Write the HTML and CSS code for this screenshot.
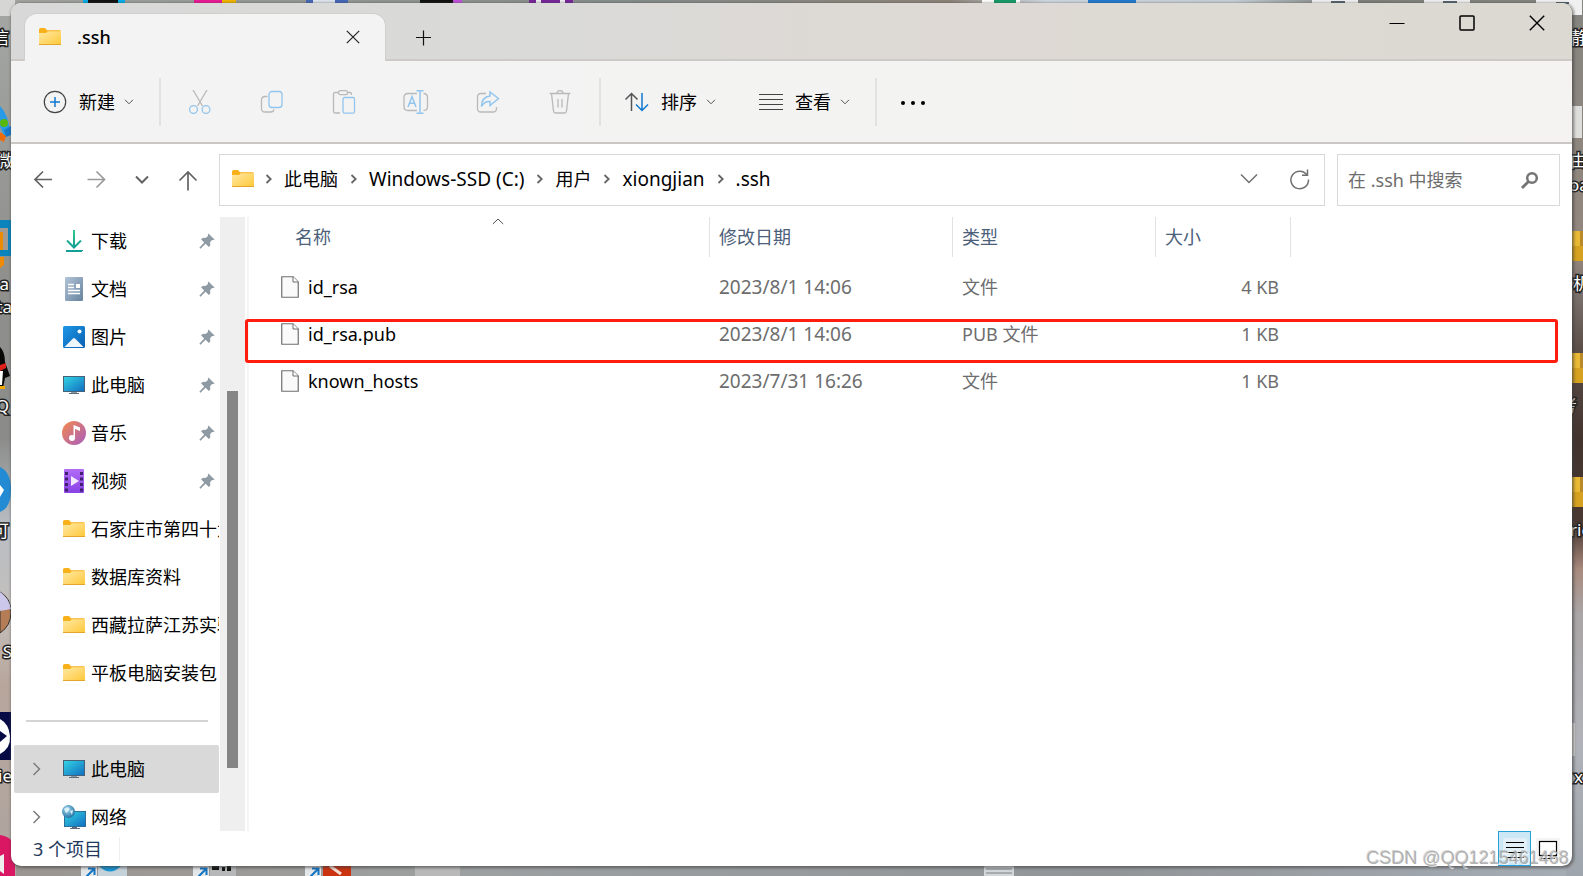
FILE: index.html
```html
<!DOCTYPE html>
<html lang="zh-CN">
<head>
<meta charset="utf-8">
<title>.ssh</title>
<link rel="stylesheet" href="styles.css">
</head>
<body>
<svg width="0" height="0" class="defs" aria-hidden="true">
  <defs>
    <linearGradient id="gFolder" x1="0" y1="0" x2="1" y2="1"><stop offset="0" stop-color="#ffe9a6"/><stop offset="1" stop-color="#ffc83a"/></linearGradient>
    <linearGradient id="gScreen" x1="0" y1="0" x2="1" y2="1"><stop offset="0" stop-color="#35d6e4"/><stop offset="1" stop-color="#0f6cc0"/></linearGradient>
    <linearGradient id="gDoc" x1="0" y1="0" x2="1" y2="1"><stop offset="0" stop-color="#b2c4d8"/><stop offset="1" stop-color="#67839f"/></linearGradient>
    <linearGradient id="gPic" x1="0" y1="0" x2="1" y2="1"><stop offset="0" stop-color="#1c98e6"/><stop offset="1" stop-color="#0c5fb0"/></linearGradient>
    <linearGradient id="gMusic" x1="0" y1="0" x2="1" y2="1"><stop offset="0" stop-color="#f58a4b"/><stop offset="1" stop-color="#a65cc0"/></linearGradient>
    <linearGradient id="gVideo" x1="0" y1="0" x2="0" y2="1"><stop offset="0" stop-color="#b36cf5"/><stop offset="1" stop-color="#8742e6"/></linearGradient>
    <linearGradient id="gDown" x1="0" y1="0" x2="0" y2="1"><stop offset="0" stop-color="#35c98c"/><stop offset="1" stop-color="#109f96"/></linearGradient>
    <radialGradient id="gGlobe" cx=".4" cy=".35" r=".7"><stop offset="0" stop-color="#a5dcf2"/><stop offset="1" stop-color="#1f6b9e"/></radialGradient>
    <linearGradient id="gLeft" x1="0" y1="0" x2="0" y2="1"><stop offset="0" stop-color="#a5a7a4"/><stop offset=".3" stop-color="#90918d"/><stop offset=".5" stop-color="#8b8c8a"/><stop offset=".6" stop-color="#b9bec4"/><stop offset=".7" stop-color="#c4bfbc"/><stop offset=".78" stop-color="#b8a69c"/><stop offset="1" stop-color="#ada59f"/></linearGradient>
    <linearGradient id="gRight" x1="0" y1="0" x2="0" y2="1"><stop offset="0" stop-color="#85857f"/><stop offset=".29" stop-color="#94877e"/><stop offset=".33" stop-color="#7e746f"/><stop offset=".4" stop-color="#5a4d47"/><stop offset=".5" stop-color="#43342e"/><stop offset=".6" stop-color="#4a3832"/><stop offset=".65" stop-color="#a98a7e"/><stop offset=".7" stop-color="#aaa5a6"/><stop offset=".85" stop-color="#b0b3b9"/><stop offset="1" stop-color="#9fa5ac"/></linearGradient>
    <linearGradient id="gTop" x1="0" y1="0" x2="1" y2="0"><stop offset="0" stop-color="#a2a4a0"/><stop offset=".4" stop-color="#858c8a"/><stop offset=".6" stop-color="#8c8378"/><stop offset=".66" stop-color="#cfd8e0"/><stop offset=".78" stop-color="#c5cfd6"/><stop offset=".85" stop-color="#7d807a"/><stop offset="1" stop-color="#868680"/></linearGradient>
    <linearGradient id="gBottom" x1="0" y1="0" x2="1" y2="0"><stop offset="0" stop-color="#9b9590"/><stop offset=".3" stop-color="#9da0a1"/><stop offset=".7" stop-color="#929598"/><stop offset="1" stop-color="#a5adb5"/></linearGradient>
    <symbol id="folder" viewBox="0 0 24 20"><path d="M1 2.500Q1 1 2.500 1H7L9 3.200H22.500V6H1z" fill="#f9b11b"/><path d="M1 6H8L10 4.200H23V17.500H1z" fill="url(#gFolder)"/><path d="M1 17.500H23" stroke="#e3a62b" stroke-width="1"/></symbol>
    <symbol id="computer" viewBox="0 0 24 24"><path d="M9 18h6v2H9z" fill="#8a98a6"/><path d="M7 20h10v1H7z" fill="#5f6b78"/><rect x="1.500" y="3.500" width="21" height="15" fill="url(#gScreen)" stroke="#47617a"/></symbol>
    <symbol id="pin" viewBox="0 0 16 16"><path d="M9.500.500 15.500 6.500Q14.500 7.300 13 7L11 9.500Q12 12.500 9.800 14L6.600 10.800 1.500 15.800.300 14.700 5.200 9.400 2 6.200Q3.700 4 6.500 5L9 3Q8.500 1.500 9.500.500z" fill="#8f9ba4"/></symbol>
    <symbol id="caret" viewBox="0 0 10 6"><path d="M1 .800 5 4.800 9 .800" fill="none" stroke="currentColor"/></symbol>
    <symbol id="next" viewBox="0 0 8 12"><path d="M1.500 2 5.700 6 1.500 10" fill="none" stroke="currentColor" stroke-width="1.800"/></symbol>
    <symbol id="expand" viewBox="0 0 10 16"><path d="M1.500 2 7.500 8 1.500 14" fill="none" stroke="#7d7d7d" stroke-width="1.500"/></symbol>
    <symbol id="file" viewBox="0 0 18 22"><path d="M.750.750H12L17.250 6V21.250H.750z" fill="#fafafa" stroke="#6f6f6f" stroke-width="1.200"/><path d="M12 .750V6H17.250" fill="#fff" stroke="#6f6f6f"/></symbol>
    <symbol id="dfolder" viewBox="0 0 44 30"><path d="M0 0h30v30H0z" fill="#d5a11f"/><path d="M0 0h8v15H0z" fill="#e9b933"/><path d="M8 0h12v15H8z" fill="#b98a29"/></symbol>
    <symbol id="shortcut" viewBox="0 0 16 12"><path d="M0 0h16v12H0z" fill="#e4e7e9"/><path d="M5 11 13 3M7 2.500h6.500V9" fill="none" stroke="#1474c4" stroke-width="2"/></symbol>
  </defs>
</svg>

<svg class="desktop" viewBox="0 0 1583 876" preserveAspectRatio="none" aria-hidden="true">
  <rect width="1583" height="876" fill="url(#gTop)"/>
  <rect y="862" width="1583" height="14" fill="url(#gBottom)"/>
  <rect width="16" height="876" fill="url(#gLeft)"/>
  <rect x="1566" width="17" height="876" fill="url(#gRight)"/>
  <path d="M0 0H15V8L10 16H0z" fill="#d6d6d4"/>
  <path d="M83 0h42v3H83z" fill="#00aeea"/><path d="M88 0h30v3H88z" fill="#111"/>
  <path d="M194 0h28v3h-28z" fill="#ec1997"/><path d="M222 0h14v3h-14z" fill="#f0b400"/>
  <path d="M306 0h42v3h-42z" fill="#4568b8"/><path d="M313 0h22v3h-22z" fill="#dfe4ef"/>
  <path d="M420 0h33v3h-33z" fill="#111"/><path d="M453 0h9v3h-9z" fill="#c050d8"/>
  <path d="M529 0h44v3h-44z" fill="#77279a"/><path d="M536 0h5v3h-5zM560 0h5v3h-5z" fill="#eee"/>
  <path d="M982 0h38v3h-38z" fill="#fff"/><path d="M994 0h22v3h-22z" fill="#159b66"/>
  <path d="M1088 0h48v3h-48z" fill="#1f7ad0"/>
  <path d="M1312 0h46v3h-46zM1424 0h46v3h-46zM1536 0h46v15h-46z" fill="#f0f0f0"/>
  <path d="M1331 2h14M1443 2h14M1556 3h13" stroke="#56636d" stroke-width="2"/>

  <path d="M0 106Q9 115 10 134L4 136 0 126z" fill="#279be8"/><circle cx="4" cy="123" r="4" fill="#57b80b"/><path d="M0 132 6 136 4 142 0 140z" fill="#ed6b0b"/><path d="M4 130 11 126V135L6 137z" fill="#1679c9"/>
  <path d="M0 220H11V256H0z" fill="#0b83bd"/><path d="M0 228H8V250H0z" fill="#a39b91"/><path d="M0 232H3V250H0zM0 257H4V265L0 268z" fill="#ed8b05"/>
  <path d="M0 347Q5 352 5 362L10 376 5 378 3 388H0z" fill="#080808"/><path d="M0 365 6 363V368L0 371z" fill="#df2019"/><path d="M0 371H3L2 385H0z" fill="#fff"/><path d="M0 386H5V389H0z" fill="#f4a900"/>
  <path d="M0 467Q11 472 11 490T0 512z" fill="#238bd4"/><path d="M0 485 4 490 0 497z" fill="#fff"/>
  <path d="M0 592Q11 598 11 612T0 633z" fill="#b57d55" stroke="#333" stroke-width="1"/><path d="M0 592Q9 598 11 609L0 611z" fill="#cbc8ec"/>
  <path d="M0 712H11V760H0z" fill="#060b45"/><path d="M0 719Q9 724 10 736T0 754z" fill="#fff"/><path d="M0 731 7 736 0 742z" fill="#060b45"/>
  <path d="M0 835Q14 837 15 850V876H0z" fill="#d91762"/><path d="M0 856 4 854V874L0 871z" fill="#eee"/>

  <use href="#dfolder" x="1572" y="231" width="44" height="30"/>
  <use href="#dfolder" x="1572" y="353" width="44" height="30"/>
  <use href="#dfolder" x="1572" y="477" width="44" height="30"/>
  <path d="M1568 106h14v32h-14zM1568 723h7v33h-7z" fill="#dddddb"/>

  <path d="M98 866h29v10H98z" fill="#c6d2d9"/><path d="M99 866q11 11 22 0z" fill="#1795d5"/>
  <use href="#shortcut" x="81" y="866" width="16" height="12"/>
  <path d="M210 866h26v10h-26z" fill="#b5b7b8"/><path d="M212 868h7M222 869h3M229 866v5" stroke="#111" stroke-width="4"/>
  <use href="#shortcut" x="193" y="866" width="16" height="12"/>
  <path d="M323 866h28v10h-28z" fill="#cb3311"/><path d="M330 866l11 8" stroke="#f5ded6" stroke-width="3"/>
  <use href="#shortcut" x="305" y="866" width="16" height="12"/>
  <path d="M415 866h45v10h-45z" fill="#b9b9b9"/>
  <path d="M984 866h30v10h-30z" fill="#d4d7da"/><path d="M986 869h26M986 873h26" stroke="#788086"/>

  <g class="desk-label">
    <text x="9" y="44" text-anchor="end">信</text><text x="13" y="167" text-anchor="end">微</text>
    <text x="9" y="290" text-anchor="end">a</text><text x="12" y="313" text-anchor="end">ta</text>
    <text x="9" y="412" text-anchor="end">Q</text><text x="9" y="537" text-anchor="end">可</text>
    <text x="12" y="658" text-anchor="end">S</text><text x="12" y="782" text-anchor="end">ie</text>
    <text x="1571" y="44">静</text><text x="1570" y="167">由</text><text x="1569" y="191">oa</text>
    <text x="1573" y="290">机</text><text x="1560" y="412">考</text><text x="1570" y="536">ric</text><text x="1574" y="783">x</text>
  </g>
</svg>

<main class="window">
  <header class="titlebar">
    <div class="tab">
      <svg class="i-folder" viewBox="0 0 24 20"><use href="#folder"/></svg>
      <h1 class="tab-name">.ssh</h1>
      <button class="plain tab-close" aria-label="关闭标签页"><svg width="14" height="14" viewBox="0 0 14 14"><path d="M.800.800 13.200 13.200M13.200.800.800 13.200" fill="none" stroke="#222" stroke-width="1.200"/></svg></button>
    </div>
    <button class="plain add-tab" aria-label="新建标签页"><svg width="16" height="16" viewBox="0 0 16 16"><path d="M8.500 .500V15.500M1 7.500H16" stroke="#111" stroke-width="1.200"/></svg></button>
    <div class="win-buttons">
      <button class="plain" aria-label="最小化"><svg width="16" height="16" viewBox="0 0 16 16"><path d="M.500 8.500H15.500" stroke="#000"/></svg></button>
      <button class="plain" aria-label="最大化"><svg width="16" height="16" viewBox="0 0 16 16"><rect x="1" y="1" width="14" height="14" rx="1" fill="none" stroke="#000" stroke-width="1.500"/></svg></button>
      <button class="plain" aria-label="关闭"><svg width="16" height="16" viewBox="0 0 16 16"><path d="M.800.800 15.200 15.200M15.200.800.800 15.200" stroke="#000" stroke-width="1.400"/></svg></button>
    </div>
  </header>

  <div class="toolbar">
    <button class="plain tool-new"><svg width="24" height="24" viewBox="0 0 24 24" fill="none"><circle cx="12" cy="12" r="10.700" stroke="#444" stroke-width="1.200"/><path d="M12 7V17M7 12H17" stroke="#1079d0" stroke-width="1.500"/></svg><span>新建</span><svg class="i-caret"><use href="#caret"/></svg></button>
    <i class="rule"></i>
    <div class="tools">
      <button class="plain" aria-label="剪切" disabled><svg width="24" height="24" viewBox="0 0 24 24" fill="none" stroke-width="1.300"><path d="M5 0 14.500 16M19 0 9.500 16" stroke="#b9b9b9"/><circle cx="5.500" cy="19.500" r="3.900" stroke="#92c5ee"/><circle cx="18" cy="19.500" r="3.900" stroke="#92c5ee"/></svg></button>
      <button class="plain" aria-label="复制" disabled><svg width="24" height="24" viewBox="0 0 24 24" fill="none" stroke-width="1.300"><path d="M7.500 6.500H5Q1.500 6.500 1.500 10V18.500Q1.500 22 5 22H10.500Q13.500 22 14 19.500" stroke="#b9b9b9"/><rect x="9" y="1.500" width="13" height="16" rx="3" stroke="#92c5ee"/></svg></button>
      <button class="plain" aria-label="粘贴" disabled><svg width="24" height="24" viewBox="0 0 24 24" fill="none" stroke-width="1.300"><path d="M6.500 2.500H3Q1.500 2.500 1.500 4V21.500Q1.500 23 3 23H8M15.500 2.500H18Q19.500 2.500 19.500 4V5" stroke="#b9b9b9"/><rect x="6.500" y=".700" width="9" height="4" rx="1.800" stroke="#b9b9b9"/><rect x="11" y="7.500" width="11.500" height="15.700" rx="1.500" stroke="#92c5ee"/></svg></button>
      <button class="plain" aria-label="重命名" disabled><svg width="26" height="24" viewBox="0 0 26 24" fill="none" stroke-width="1.300"><path d="M14 3.500H5Q1 3.500 1 7.500V16.500Q1 20.500 5 20.500H14M20.500 3.500Q24.500 3.500 24.500 7.500V16.500Q24.500 20.500 20.500 20.500" stroke="#b9b9b9"/><path d="M5 17 9 6.500 13 17M6.500 13.300H11.500M17 .700V23.300M13.500.700H20.500M13.500 23.300H20.500" stroke="#92c5ee" stroke-width="1.500"/></svg></button>
      <button class="plain" aria-label="共享" disabled><svg width="24" height="24" viewBox="0 0 24 24" fill="none" stroke-width="1.300"><path d="M10 3.500H5Q1.500 3.500 1.500 7V18.500Q1.500 22 5 22H17Q20.500 22 20.500 18.500V17" stroke="#b9b9b9"/><path d="M14 2 22.500 8.500 14 15.500V11.500Q8.500 11 5.500 16.500 5.500 7 14 6z" stroke="#92c5ee" stroke-width="1.500"/></svg></button>
      <button class="plain" aria-label="删除" disabled><svg width="24" height="24" viewBox="0 0 24 24" fill="none" stroke="#b9b9b9" stroke-width="1.300"><path d="M1.500 3.500H22.500M3.500 3.500 5.500 21Q5.700 23 7.500 23H16.500Q18.300 23 18.500 21L20.500 3.500M9 3.500Q9 .700 12 .700T15 3.500M10 9V17.500M14 9V17.500"/></svg></button>
    </div>
    <i class="rule"></i>
    <button class="plain tool-sort"><svg width="25" height="20" viewBox="0 0 25 20" fill="none" stroke-width="1.500"><path d="M7.500 19V1.500M1.500 7.500 7.500 1.500 13.500 7.500" stroke="#555"/><path d="M18 1V18.500M12 12.500 18 18.500 24 12.500" stroke="#1079d0"/></svg><span>排序</span><svg class="i-caret"><use href="#caret"/></svg></button>
    <button class="plain tool-view"><svg width="24" height="18" viewBox="0 0 24 18"><path d="M0 1.500H24M0 6.500H24M0 11.500H24M0 16.500H24" stroke="#444" stroke-width="1.200"/></svg><span>查看</span><svg class="i-caret"><use href="#caret"/></svg></button>
    <i class="rule"></i>
    <button class="plain tool-more" aria-label="更多"><svg width="26" height="6" viewBox="0 0 26 6"><circle cx="3" cy="4" r="2"/><circle cx="13" cy="4" r="2"/><circle cx="23" cy="4" r="2"/></svg></button>
  </div>

  <nav class="addressbar">
    <div class="history">
      <button class="plain" aria-label="后退"><svg width="20" height="20" viewBox="0 0 20 20" fill="none" stroke="#626262" stroke-width="1.700"><path d="M19 9.500H2M10 1.500 2 9.500 10 17.500"/></svg></button>
      <button class="plain" aria-label="前进"><svg width="20" height="20" viewBox="0 0 20 20" fill="none" stroke="#9a9a9a" stroke-width="1.700"><path d="M1.500 9.500H18.500M10.500 1.500 18.500 9.500 10.500 17.500"/></svg></button>
      <button class="plain small" aria-label="最近浏览"><svg width="14" height="10" viewBox="0 0 14 10" fill="none" stroke="#626262" stroke-width="2"><path d="M1 1.500 7 7.500 13 1.500"/></svg></button>
      <button class="plain" aria-label="上移"><svg width="20" height="22" viewBox="0 0 20 22" fill="none" stroke="#626262" stroke-width="1.700"><path d="M10 21.500V3M1.500 11.500 10 3 18.500 11.500"/></svg></button>
    </div>
    <div class="path">
      <svg class="i-folder" viewBox="0 0 24 20"><use href="#folder"/></svg>
      <svg class="i-next"><use href="#next"/></svg><a href="#">此电脑</a>
      <svg class="i-next"><use href="#next"/></svg><a class="latin" href="#">Windows-SSD (C:)</a>
      <svg class="i-next"><use href="#next"/></svg><a href="#">用户</a>
      <svg class="i-next"><use href="#next"/></svg><a class="latin" href="#">xiongjian</a>
      <svg class="i-next"><use href="#next"/></svg><a class="latin" href="#">.ssh</a>
      <button class="plain path-drop" aria-label="以前的位置"><svg width="18" height="12" viewBox="0 0 18 12" fill="none" stroke="#707070" stroke-width="1.500"><path d="M1 1.500 9 9.500 17 1.500"/></svg></button>
      <button class="plain" aria-label="刷新"><svg width="20" height="22" viewBox="0 0 20 22" fill="none" stroke="#707070" stroke-width="1.500"><path d="M17 7A8.800 8.800 0 1 0 18.500 11.500M17.500 1.500V7.200H12"/></svg></button>
    </div>
    <label class="search"><input type="text" placeholder="在 .ssh 中搜索" aria-label="在 .ssh 中搜索"><svg width="18" height="18" viewBox="0 0 18 18" fill="none" stroke="#747474"><circle cx="11" cy="7" r="4.800" stroke-width="2.500"/><path d="M7.500 10.500 1 17" stroke-width="2.800"/></svg></label>
  </nav>

  <div class="content">
    <aside class="sidebar">
      <ul class="tree">
        <li><a class="node" href="#"><svg class="i-node" viewBox="0 0 24 24" fill="none" stroke="url(#gDown)" stroke-width="2"><path d="M12.010 1V18M5 11.500 12 18.500 19 11.500" /><path d="M4 22H20V22.010" stroke="#159f94"/></svg><span>下载</span><svg class="i-pin"><use href="#pin"/></svg></a></li>
        <li><a class="node" href="#"><svg class="i-node" viewBox="0 0 24 24"><rect x="3" y="0" width="18" height="24" rx="1" fill="url(#gDoc)"/><path d="M6 7.500H12M6 10.500H12M6 13.500H18M6 16.500H18" stroke="#fff" stroke-width="1.300"/><path d="M14 7h4v4h-4z" fill="#fff"/></svg><span>文档</span><svg class="i-pin"><use href="#pin"/></svg></a></li>
        <li><a class="node" href="#"><svg class="i-node" viewBox="0 0 24 24"><rect x="1" y="1" width="22" height="22" rx="1.500" fill="url(#gPic)"/><path d="M2.500 22 11 13.500Q12 12.500 13 13.500L21.500 22z" fill="#eff7fd"/><circle cx="17.500" cy="6.500" r="2" fill="#fff"/></svg><span>图片</span><svg class="i-pin"><use href="#pin"/></svg></a></li>
        <li><a class="node" href="#"><svg class="i-node"><use href="#computer"/></svg><span>此电脑</span><svg class="i-pin"><use href="#pin"/></svg></a></li>
        <li><a class="node" href="#"><svg class="i-node" viewBox="0 0 24 24"><circle cx="12" cy="12" r="12" fill="url(#gMusic)"/><circle cx="10" cy="17" r="3" fill="#fff"/><path d="M11.500 17V4L18 6.500V10L13 8V17z" fill="#fff"/></svg><span>音乐</span><svg class="i-pin"><use href="#pin"/></svg></a></li>
        <li><a class="node" href="#"><svg class="i-node" viewBox="0 0 24 24"><rect x="2" width="20" height="24" rx="1" fill="url(#gVideo)"/><path d="M4.500 3V24M19.500 3V24" stroke="#40206f" stroke-width="3" stroke-dasharray="3 2.500"/><path d="M9 7 17 12 9 17z" fill="#f2eafd"/></svg><span>视频</span><svg class="i-pin"><use href="#pin"/></svg></a></li>
        <li><a class="node" href="#"><svg class="i-node"><use href="#folder"/></svg><span>石家庄市第四十六中学</span></a></li>
        <li><a class="node" href="#"><svg class="i-node"><use href="#folder"/></svg><span>数据库资料</span></a></li>
        <li><a class="node" href="#"><svg class="i-node"><use href="#folder"/></svg><span>西藏拉萨江苏实验</span></a></li>
        <li><a class="node" href="#"><svg class="i-node"><use href="#folder"/></svg><span>平板电脑安装包</span></a></li>
        <li class="gap"></li>
        <li><a class="node current" href="#"><svg class="i-expand"><use href="#expand"/></svg><svg class="i-node"><use href="#computer"/></svg><span>此电脑</span></a></li>
        <li><a class="node" href="#"><svg class="i-expand"><use href="#expand"/></svg><svg class="i-node" viewBox="0 0 24 24"><path d="M10 21h5v2h-5zM8 23h10v1H8z" fill="#5f6b78"/><rect x="2.500" y="6.500" width="21" height="15" fill="url(#gScreen)" stroke="#2e6f98"/><circle cx="6.500" cy="6.500" r="6.500" fill="url(#gGlobe)"/><path d="M2 4Q5 1 7 3T4 8zM8 6 11 5 10 10z" fill="#d9f0f8"/></svg><span>网络</span></a></li>
      </ul>
      <div class="scroll"><div class="thumb"></div></div>
    </aside>
    <section class="files">
      <table>
        <colgroup><col class="c-name"><col class="c-date"><col class="c-type"><col class="c-size"><col></colgroup>
        <thead><tr><th class="first">名称<svg class="sorted" width="12" height="7" viewBox="0 0 12 7"><path d="M.800 6 6 1 11.200 6" fill="none" stroke="#555"/></svg></th><th>修改日期</th><th>类型</th><th>大小</th><td></td></tr></thead>
        <tbody>
          <tr><td><div class="name"><svg class="i-file"><use href="#file"/></svg>id_rsa</div></td><td class="latin">2023/8/1 14:06</td><td>文件</td><td class="size">4 KB</td><td></td></tr>
          <tr><td><div class="name"><svg class="i-file"><use href="#file"/></svg>id_rsa.pub</div></td><td class="latin">2023/8/1 14:06</td><td>PUB 文件</td><td class="size">1 KB</td><td></td></tr>
          <tr><td><div class="name"><svg class="i-file"><use href="#file"/></svg>known_hosts</div></td><td class="latin">2023/7/31 16:26</td><td>文件</td><td class="size">1 KB</td><td></td></tr>
        </tbody>
      </table>
      <div class="highlight"></div>
    </section>
  </div>

  <footer class="status">
    <span class="count">3 个项目</span>
    <div class="views">
      <button class="plain view on" aria-label="详细信息"><svg width="24" height="22" viewBox="0 0 24 22"><rect width="24" height="22" rx="2" fill="#e3eff6"/><path d="M3 4.500H21M3 9.500H21M3 14.500H21M3 19.500H21" stroke="#000" stroke-width="1.200"/></svg></button>
      <button class="plain view" aria-label="大图标"><svg width="24" height="22" viewBox="0 0 24 22"><rect width="24" height="22" rx="2" fill="#f4f4f4"/><rect x="3.500" y="3.500" width="17" height="14" fill="#fff" stroke="#000" stroke-width="1.200"/><path d="M5 20.500H19" stroke="#000"/></svg></button>
    </div>
  </footer>
</main>
<div class="watermark">CSDN @QQ1215461468</div>
</body>
</html>
```
FILE: styles.css
```css
* { box-sizing: border-box; }

body {
  margin: 0;
  min-height: 100vh;
  padding: 3px 11px 10px;
  display: flex;
  position: relative;
  overflow: hidden;
  font-family: "Noto Sans", "Noto Sans CJK SC", sans-serif;
  font-size: 18px;
  line-height: 24px;
  color: #000;
}

svg { display: block; flex: none; }
a { color: inherit; text-decoration: none; }
.defs { position: absolute; }
.latin { font-size: 19px; }

.plain {
  border: 0;
  padding: 0;
  background: none;
  font: inherit;
  color: inherit;
  display: flex;
  align-items: center;
  justify-content: center;
}

.desktop {
  position: absolute;
  inset: 0;
  width: 100%;
  height: 100%;
}
.desk-label {
  font-size: 17px;
  fill: #fff;
  stroke: #222;
  stroke-width: 3px;
  paint-order: stroke;
}

.window {
  position: relative;
  flex: 1;
  min-width: 0;
  display: flex;
  flex-direction: column;
  background: #fff;
  border-radius: 10px;
  overflow: hidden;
  box-shadow: 1px 1px 3px 1px rgba(60, 60, 60, 0.6);
}

/* title bar */
.titlebar {
  height: 58px;
  display: flex;
  align-items: flex-end;
  padding-left: 14px;
  background: linear-gradient(90deg, #d8d8d8, #dadad8 35%, #ded9d4 60%, #dcd9d2);
  box-shadow: inset 0 -2px #cdc9c6;
}
.tab {
  width: 360px;
  height: 47px;
  display: flex;
  align-items: center;
  padding: 0 25px 2px 13px;
  background: #f3f3f3;
  border-radius: 12px 12px 0 0;
  box-shadow: 0 0 0 1px #cfcfcf;
  clip-path: inset(-1px -1px 0 -1px);
}
.tab-name {
  margin: 0 auto 0 15px;
  font-size: 18px;
  font-weight: 500;
}
.add-tab {
  margin-left: 22px;
  width: 32px;
  height: 47px;
}
.win-buttons {
  margin-left: auto;
  align-self: flex-start;
  display: flex;
}
.win-buttons .plain {
  width: 70px;
  height: 40px;
}

/* command bar */
.toolbar {
  height: 83px;
  display: flex;
  align-items: center;
  padding-left: 32px;
  background: linear-gradient(90deg, #f3f3f3, #f4f3f2);
  border-bottom: 2px solid #cbc7c4;
}
.toolbar span { margin: 0 9px 0 12px; }
.rule {
  width: 2px;
  height: 48px;
  background: #e2e2e1;
}
.tool-new { margin-right: 25px; }
.tools {
  display: flex;
  gap: 48px;
  margin: 0 27px;
}
.tools .plain { width: 24px; }
.tool-sort { margin-left: 23px; }
.tool-view { margin: 0 25px 0 43px; }
.tool-more { margin-left: 23px; }
.i-caret { width: 10px; height: 6px; color: #555; }

/* address bar */
.addressbar {
  display: flex;
  padding: 10px 12px 11px 22px;
}
.history {
  display: flex;
  align-items: center;
  gap: 33px;
  width: 186px;
}
.history .small { margin: 0 -4px; }
.path {
  flex: 1;
  min-width: 0;
  height: 52px;
  display: flex;
  align-items: center;
  padding: 0 14px 2px 11px;
  border: 1px solid #d9d9d9;
  white-space: nowrap;
}
.i-folder { width: 24px; height: 20px; }
.path .i-folder { margin-right: -2px; }
.i-next {
  width: 8px;
  height: 12px;
  margin: 0 11px 0 12px;
  color: #666;
}
.path-drop { margin: 0 32px 0 auto; }
.search {
  width: 223px;
  height: 52px;
  margin-left: 12px;
  display: flex;
  align-items: center;
  padding: 0 20px 0 10px;
  border: 1px solid #d9d9d9;
}
.search input {
  flex: 1;
  min-width: 0;
  border: 0;
  padding: 0;
  font: inherit;
  background: none;
}
.search input::placeholder { color: #6d6d6d; opacity: 1; }

/* body */
.content {
  flex: 1 1 0;
  min-height: 0;
  display: flex;
}
.sidebar {
  width: 234px;
  display: flex;
}
.tree {
  flex: 1;
  min-width: 0;
  height: 100%;
  overflow: hidden;
  margin: 0;
  padding: 0 1px 0 3px;
  list-style: none;
}
.node {
  position: relative;
  display: flex;
  align-items: center;
  height: 48px;
  padding-left: 48px;
  border-radius: 2px;
}
.node span {
  flex: 1;
  min-width: 0;
  margin-left: 5px;
  overflow: hidden;
  white-space: nowrap;
}
.node.current { background: #d9d9d9; }
.i-node { width: 24px; height: 24px; }
.i-pin { width: 16px; height: 16px; margin-right: 4px; }
.i-expand {
  width: 10px;
  height: 16px;
  margin: 0 20px 0 -30px;
}
.gap {
  height: 48px;
  padding: 23px 11px 0 12px;
}
.gap::before {
  content: "";
  display: block;
  height: 2px;
  background: #d5d5d5;
}
.scroll {
  width: 25px;
  background: #efefef;
  padding: 174px 7px 63px;
}
.thumb {
  height: 100%;
  background: #858585;
}

/* file list */
.files {
  position: relative;
  flex: 1;
  min-width: 0;
  margin-left: 2px;
  border-left: 2px solid #f5f5f5;
}
table {
  width: 100%;
  table-layout: fixed;
  border-spacing: 0;
}
.c-name { width: 461px; }
.c-date { width: 243px; }
.c-type { width: 203px; }
.c-size { width: 135px; }
th, td { padding: 0 0 0 9px; text-align: left; }
th {
  position: relative;
  height: 40px;
  border-right: 1px solid #e2e2e2;
  font-weight: 400;
  color: #4c607a;
}
th.first { padding-left: 46px; }
.sorted {
  position: absolute;
  top: 1px;
  left: 50%;
  margin-left: 13px;
}
tbody::before {
  content: "";
  display: block;
  height: 6px;
}
tbody td { height: 47px; color: #6d6d6d; }
.name {
  display: flex;
  align-items: center;
  gap: 9px;
  padding-left: 23px;
  color: #000;
}
.i-file { width: 18px; height: 22px; }
td.size { text-align: right; padding-right: 12px; }
.highlight {
  position: absolute;
  top: 102px;
  left: -4px;
  right: 14px;
  height: 44px;
  border: 3px solid #ff1d0f;
  border-radius: 3px;
}

/* status bar */
.status {
  height: 35px;
  display: flex;
  align-items: center;
  justify-content: space-between;
  padding: 0 8px 0 22px;
  color: #1e395b;
}
.count {
  padding-right: 17px;
  border-right: 1px solid #eeeeee;
}
.views { display: flex; }
.view {
  width: 33px;
  height: 35px;
  border: 1px solid transparent;
}
.view.on { background: #cce8f6; border-color: #26a0da; }

.watermark {
  position: absolute;
  right: 14px;
  bottom: 6px;
  font: 18px/24px "Liberation Sans", sans-serif;
  color: rgba(165, 165, 165, 0.85);
  text-shadow: 1px 1px 0 rgba(255, 255, 255, 0.7), -1px -1px 0 rgba(130, 130, 130, 0.35);
}
```
